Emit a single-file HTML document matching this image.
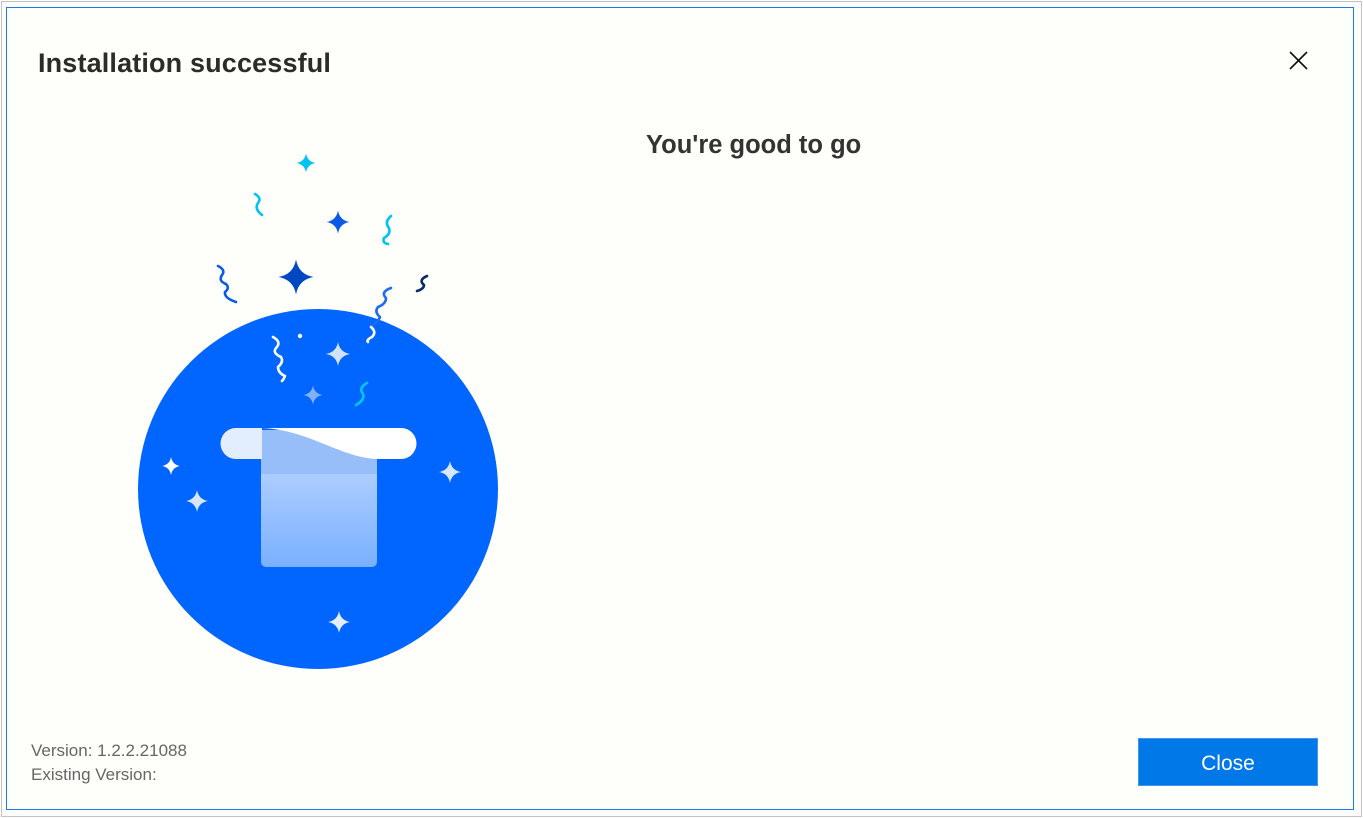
<!DOCTYPE html>
<html><head><meta charset="utf-8"><style>
html,body{margin:0;padding:0;}
body{width:1363px;height:818px;background:#fff;position:relative;overflow:hidden;font-family:"Segoe UI","Liberation Sans",sans-serif;}
.outer{position:absolute;left:1px;top:1px;width:1359px;height:814px;border:1px solid #c3c3c3;background:#fdfdfb;}
.win{position:absolute;left:6px;top:7px;width:1346px;height:801px;border:1px solid #1a7ce6;background:#fefefb;}
.title{position:absolute;left:38px;top:48px;font-size:27px;color:#2b2b2b;font-weight:600;letter-spacing:0.15px;}
.sub{position:absolute;left:646px;top:131px;font-size:25.5px;color:#333;font-weight:600;}
.ver{position:absolute;left:31px;top:739px;font-size:17px;color:#666;line-height:24px;}
.btn{position:absolute;left:1138px;top:738px;width:178px;height:46px;background:#0078e7;border:1px solid #3f96ee;color:#fff;font-size:21px;text-align:center;line-height:50px;}
</style></head><body>
<div class="outer"></div>
<div class="win"></div>
<div class="title">Installation successful</div>
<div class="sub">You're good to go</div>
<svg style="position:absolute;left:1289px;top:51px" width="20" height="20"><path d="M1 1L18 18M18 1L1 18" stroke="#111" stroke-width="1.6"/></svg>
<svg style="position:absolute;left:0;top:0" width="520" height="700">
<defs>
<linearGradient id="g1" x1="0" y1="0" x2="0" y2="1"><stop offset="0" stop-color="#cfe0ff"/><stop offset="1" stop-color="#80b4ff"/></linearGradient>
<g id="st"><path d="M0,-10 Q1.5,-1.5 10,0 Q1.5,1.5 0,10 Q-1.5,1.5 -10,0 Q-1.5,-1.5 0,-10Z"/></g>
</defs>
<circle cx="318" cy="489" r="180" fill="#0066ff"/>
<use href="#st" transform="translate(306,163) scale(0.95)" fill="#00c2f5"/>
<use href="#st" transform="translate(338,222) scale(1.15)" fill="#0a5ae6"/>
<use href="#st" transform="translate(296,277) scale(1.75)" fill="#0047c2"/>
<use href="#st" transform="translate(338,354) scale(1.2)" fill="#d2e2fb"/>
<use href="#st" transform="translate(313,395) scale(0.95)" fill="#82b0f5"/>
<use href="#st" transform="translate(171,466) scale(0.9)" fill="#ffffff"/>
<use href="#st" transform="translate(197,501) scale(1.1)" fill="#d8e6fc"/>
<use href="#st" transform="translate(450,472) scale(1.1)" fill="#d8e6fc"/>
<use href="#st" transform="translate(339,622) scale(1.1)" fill="#e4eefd"/>
<circle cx="300" cy="336" r="2.2" fill="#fff"/>
<g fill="none" stroke-width="2.6" stroke-linecap="round" stroke-linejoin="round">
<path d="M255,194 Q262,198 258,203 Q254,209 262,215" stroke="#00c2f5"/>
<path d="M391,216 Q384,222 389,228 Q391,234 384,238 Q382,243 388,244" stroke="#00c2f5"/>
<path d="M218,266 Q226,270 222,275 Q218,281 226,284 Q230,288 225,292 Q224,298 236,302" stroke="#0a5ae6"/>
<path d="M427,276 Q418,280 424,285 Q424,289 417,291" stroke="#0a2a6e"/>
<path d="M391,288 Q380,292 386,298 Q386,304 378,307 Q374,312 380,317 Q378,322 371,327" stroke="#1a6cf0"/>
<path d="M371,327 Q377,332 372,337 Q366,340 368,342" stroke="#fff"/>
<path d="M273,337 Q282,342 276,348 Q272,353 281,357 Q284,362 278,367 Q278,373 285,376 Q284,379 282,381" stroke="#fff"/>
<path d="M367,383 Q358,388 363,394 Q365,400 356,405" stroke="#00c8ee"/>
</g>
<rect x="261" y="430" width="116" height="137" rx="5" fill="url(#g1)" opacity="0.95"/>
<rect x="261" y="430" width="116" height="44" fill="#97bef8"/>
<path d="M236,428 L262,428 L262,459 L236,459 A15.5,15.5 0 0 1 236,428Z" fill="#e2edfd"/>
<path d="M262,428 L401,428 A15.5,15.5 0 0 1 401,459 L378,459 C340,458 310,430 262,428Z" fill="#ffffff"/>
</svg>
<div class="ver">Version: 1.2.2.21088<br>Existing Version:</div>
<div class="btn">Close</div>
</body></html>
